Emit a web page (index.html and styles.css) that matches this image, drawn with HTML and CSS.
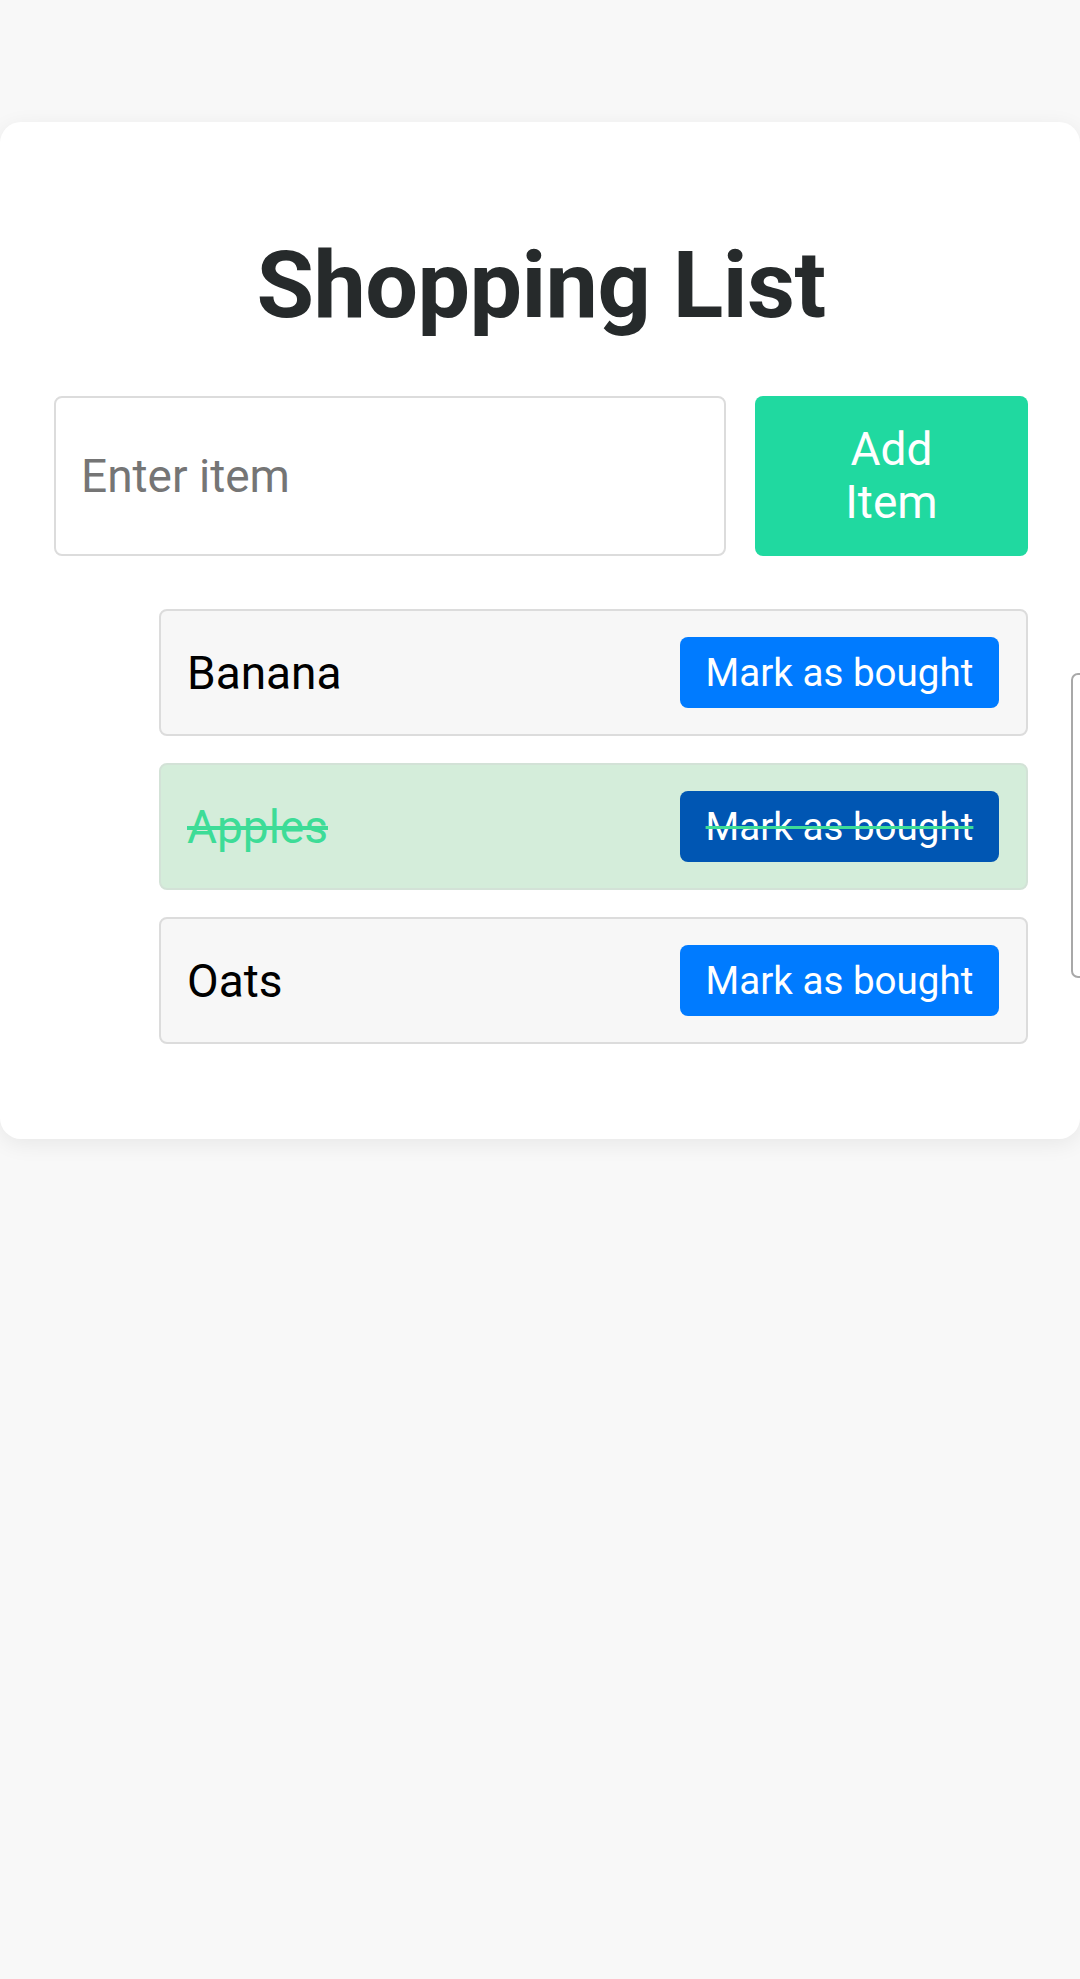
FILE: index.html
```html
<!DOCTYPE html>
<html lang="en">
<head>
<meta charset="utf-8">
<title>Shopping List</title>
<link rel="stylesheet" href="styles.css">
</head>
<body>
<div class="card">
  <h1 class="title">Shopping List</h1>
  <form class="add-form">
    <input class="item-input" type="text" placeholder="Enter item">
    <button class="add-btn" type="button">Add<br>Item</button>
  </form>
  <ul class="list">
    <li class="item"><span class="item-name">Banana</span><button class="mark-btn" type="button">Mark as bought</button></li>
    <li class="item bought"><span class="item-name">Apples</span><button class="mark-btn" type="button">Mark as bought</button></li>
    <li class="item"><span class="item-name">Oats</span><button class="mark-btn" type="button">Mark as bought</button></li>
  </ul>
</div>
<div class="side-panel"></div>
</body>
</html>
```
FILE: styles.css
```css
html, body {
  margin: 0;
  padding: 0;
}
body {
  background: #f8f8f8;
  font-family: Roboto, "Noto Sans", sans-serif;
  min-height: 1979px;
  position: relative;
  overflow: hidden;
}
.card {
  margin-top: 122px;
  background: #ffffff;
  border-radius: 21px;
  box-shadow: 0 5px 22px rgba(0, 0, 0, 0.07);
  padding: 107px 52px 68px 54px;
  box-sizing: border-box;
  width: 1080px;
}
.title {
  margin: 0;
  font-size: 93.5px;
  line-height: 113px;
  font-weight: 700;
  color: #262a2b;
  text-align: center;
  letter-spacing: -0.6px;
}
.add-form {
  display: flex;
  gap: 29px;
  margin-top: 54px;
}
.item-input {
  flex: 1;
  height: 160px;
  box-sizing: border-box;
  border: 2px solid #dcdcdc;
  border-radius: 8px;
  padding: 0 25px;
  font-family: Roboto, sans-serif;
  font-size: 46px;
  color: #333;
  outline: none;
}
.item-input::placeholder {
  color: #757575;
}
.add-btn {
  width: 273px;
  height: 160px;
  border: none;
  border-radius: 8px;
  background: #20d9a0;
  color: #ffffff;
  font-family: Roboto, sans-serif;
  font-size: 46px;
  line-height: 53px;
  padding: 0;
}
.list {
  list-style: none;
  margin: 53px 0 0;
  padding: 0 0 0 105px;
}
.item {
  display: flex;
  justify-content: space-between;
  align-items: center;
  height: 127px;
  box-sizing: border-box;
  margin-bottom: 27px;
  padding: 0 27px 0 26px;
  background: #f7f7f7;
  border: 2px solid #dcdcdc;
  border-radius: 8px;
  font-size: 46px;
  color: #000000;
}
.item:last-child {
  margin-bottom: 27px;
}
.item.bought {
  background: #d4edda;
  border-color: #d3e2d7;
  color: #3ddc97;
  text-decoration: line-through;
}
.mark-btn {
  height: 71px;
  width: 319px;
  border: none;
  border-radius: 8px;
  background: #007bff;
  color: #ffffff;
  font-family: Roboto, sans-serif;
  font-size: 38.6px;
  padding: 0;
}
.item.bought .mark-btn {
  background: #0056b3;
}
.side-panel {
  position: absolute;
  left: 1071px;
  top: 673px;
  width: 60px;
  height: 305px;
  box-sizing: border-box;
  border: 2px solid #a8a8a8;
  border-radius: 7px;
  background: #ffffff;
}
```
